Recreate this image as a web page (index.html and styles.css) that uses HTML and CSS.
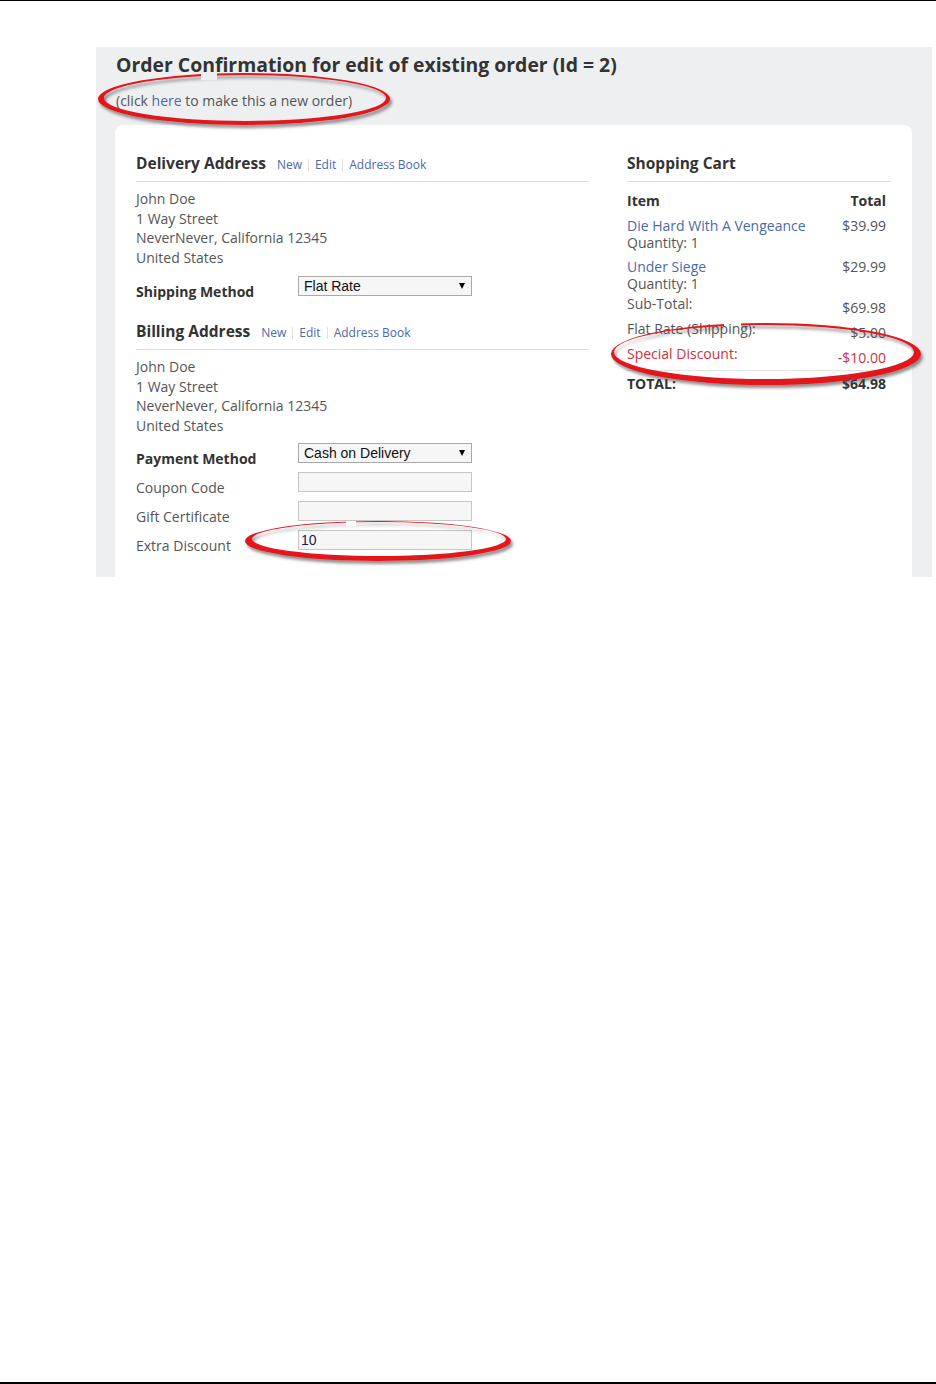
FILE: index.html
```html
<!DOCTYPE html>
<html>
<head>
    <title>Order Confirmation</title>
    <link rel="stylesheet" href="styles.css">
</head>
<body>
<div class="page">
    <div class="panel">
        <h1 class="page-title">Order Confirmation for edit of existing order (Id = 2)</h1>
        <p class="subtitle">(click <a href="#">here</a> to make this a new order)</p>

        <div class="card">
            <div class="col-left">
                <div class="section-head">
                    <h2>Delivery Address</h2>
                    <div class="head-links"><a href="#">New</a><a href="#">Edit</a><a href="#">Address Book</a></div>
                </div>
                <div class="address">John Doe<br>1 Way Street<br>NeverNever, California 12345<br>United States</div>
                <div class="form-row first">
                    <label class="strong">Shipping Method</label>
                    <div class="fake-select">Flat Rate<span class="arrow"></span></div>
                </div>

                <div class="section-head billing">
                    <h2>Billing Address</h2>
                    <div class="head-links"><a href="#">New</a><a href="#">Edit</a><a href="#">Address Book</a></div>
                </div>
                <div class="address">John Doe<br>1 Way Street<br>NeverNever, California 12345<br>United States</div>
                <div class="form-rows">
                    <div class="form-row">
                        <label class="strong">Payment Method</label>
                        <div class="fake-select">Cash on Delivery<span class="arrow"></span></div>
                    </div>
                    <div class="form-row">
                        <label>Coupon Code</label>
                        <div class="text-input"></div>
                    </div>
                    <div class="form-row">
                        <label>Gift Certificate</label>
                        <div class="text-input"></div>
                    </div>
                    <div class="form-row">
                        <label>Extra Discount</label>
                        <div class="text-input filled">10</div>
                    </div>
                </div>
            </div>

            <div class="col-right">
                <div class="section-head">
                    <h2>Shopping Cart</h2>
                </div>
                <div class="cart-row cart-head"><span>Item</span><span>Total</span></div>
                <div class="cart-row item">
                    <div><a href="#">Die Hard With A Vengeance</a><br>Quantity: 1</div>
                    <span>$39.99</span>
                </div>
                <div class="cart-row item">
                    <div><a href="#">Under Siege</a><br>Quantity: 1</div>
                    <span>$29.99</span>
                </div>
                <div class="cart-row sum"><span>Sub-Total:</span><span class="val">$69.98</span></div>
                <div class="cart-row sum"><span>Flat Rate (Shipping):</span><span class="val">$5.00</span></div>
                <div class="cart-row sum discount"><span>Special Discount:</span><span class="val">-$10.00</span></div>
                <div class="cart-row total"><span>TOTAL:</span><span>$64.98</span></div>
            </div>
        </div>
    </div>

    <!-- hand drawn red circles over the screenshot -->
    <svg class="marks" width="936" height="600" viewBox="0 0 936 600">
        <defs>
            <filter id="shadow" x="-10%" y="-30%" width="120%" height="160%">
                <feDropShadow dx="2" dy="3" stdDeviation="1.8" flood-color="#444" flood-opacity="0.6"/>
            </filter>
            <mask id="gaps">
                <rect x="0" y="0" width="936" height="600" fill="#fff"/>
                <rect x="201" y="66" width="16" height="14" fill="#000"/>
                <rect x="724" y="316" width="17" height="14" fill="#000"/>
                <rect x="346" y="514" width="10" height="12" fill="#000"/>
            </mask>
        </defs>
        <g fill="#e3131c" fill-rule="evenodd" filter="url(#shadow)" mask="url(#gaps)">
            <path d="M98 99 a146 26 0 1 0 292 0 a146 26 0 1 0 -292 0 Z M104 98 a141 23 0 1 0 282 0 a141 23 0 1 0 -282 0 Z"/>
            <path d="M611 354 a155 31 0 1 0 310 0 a155 31 0 1 0 -310 0 Z M614 352 a150 27 0 1 0 300 0 a150 27 0 1 0 -300 0 Z"/>
            <path d="M245 541 a133 20 0 1 0 266 0 a133 20 0 1 0 -266 0 Z M252 539 a127 17 0 1 0 254 0 a127 17 0 1 0 -254 0 Z"/>
        </g>
    </svg>
</div>
</body>
</html>
```

FILE: styles.css
```css
body {
    margin: 0;
    font-family: "Open Sans", "Liberation Sans", sans-serif;
    color: #555;
    background-color: #fff;
}

a {
    color: #4a6aab;
    text-decoration: none;
}

.page {
    position: relative;
    height: 1384px;
    box-sizing: border-box;
    border-top: 1px solid #000;
    border-bottom: 2px solid #000;
    padding-top: 46px;
}

.panel {
    margin-left: 96px;
    width: 836px;
    height: 530px;
    box-sizing: border-box;
    padding: 6px 0 0 20px;
    background-color: #eeeff1;
    display: flex;
    flex-direction: column;
}

.page-title {
    margin: 0;
    font-size: 19.4px;
    font-weight: 700;
    line-height: 24px;
    color: #333;
}

.subtitle {
    margin: 15px 0 0;
    font-size: 14px;
    line-height: 18px;
}

.card {
    margin: 15px 0 0 -1px;
    width: 797px;
    flex: 1;
    box-sizing: border-box;
    padding: 27px 21px 0;
    background-color: #fff;
    border-radius: 8px 8px 0 0;
    display: flex;
    gap: 38px;
}

.col-left {
    width: 453px;
}

.col-right {
    width: 264px;
}

.section-head {
    display: flex;
    align-items: baseline;
    padding-bottom: 7px;
    border-bottom: 1px solid #dcdcdc;
}

.section-head h2 {
    margin: 0;
    font-size: 15.5px;
    font-weight: 700;
    line-height: 22px;
    color: #333;
}

.section-head.billing {
    margin-top: 18px;
}

.head-links {
    margin-left: 5px;
    display: flex;
    font-size: 12px;
}

.head-links a {
    padding: 0 6px;
    line-height: 12px;
    border-left: 1px solid #e2e2e2;
}

.head-links a:first-child {
    border-left: none;
}

.address {
    margin-top: 7px;
    font-size: 14px;
    line-height: 19.5px;
}

.form-row {
    display: grid;
    grid-template-columns: 162px 174px;
    align-items: start;
    font-size: 14px;
}

.form-row.first {
    margin-top: 9px;
}

.form-row label {
    padding-top: 6px;
    line-height: 20px;
}

.form-row label.strong {
    font-weight: 700;
    color: #333;
}

.form-rows {
    margin-top: 8px;
    display: flex;
    flex-direction: column;
    gap: 3px;
}

.fake-select {
    position: relative;
    height: 20px;
    box-sizing: border-box;
    padding-left: 5px;
    border: 1px solid #a9a9a9;
    background-color: #f6f6f6;
    font-family: "Liberation Sans", Arial, sans-serif;
    font-size: 14px;
    line-height: 18px;
    color: #111;
}

.arrow {
    position: absolute;
    right: 6px;
    top: 6px;
    border-left: 3.5px solid transparent;
    border-right: 3.5px solid transparent;
    border-top: 6px solid #000;
}

.text-input {
    height: 20px;
    box-sizing: border-box;
    padding-left: 2px;
    border: 1px solid #c6c6c6;
    background-color: #f6f6f6;
    font-family: "Liberation Sans", Arial, sans-serif;
    font-size: 14px;
    line-height: 18px;
    color: #1a1a5a;
}

.cart-row {
    display: flex;
    justify-content: space-between;
    padding-right: 5px;
    font-size: 14px;
    line-height: 17px;
}

.cart-head {
    margin-top: 10px;
    line-height: 18px;
    font-weight: 700;
    color: #333;
}

.item {
    margin-top: 7px;
}

.sum {
    height: 21px;
    margin-top: 4px;
}

.sum .val {
    align-self: flex-end;
}

.item + .sum {
    margin-top: 3px;
}

.discount {
    color: #d2303c;
}

.total {
    margin-top: 4px;
    padding-top: 4px;
    border-top: 1px solid #e3e3e3;
    font-weight: 700;
    color: #333;
}

.marks {
    position: absolute;
    top: -1px;
    left: 0;
    pointer-events: none;
}
```
